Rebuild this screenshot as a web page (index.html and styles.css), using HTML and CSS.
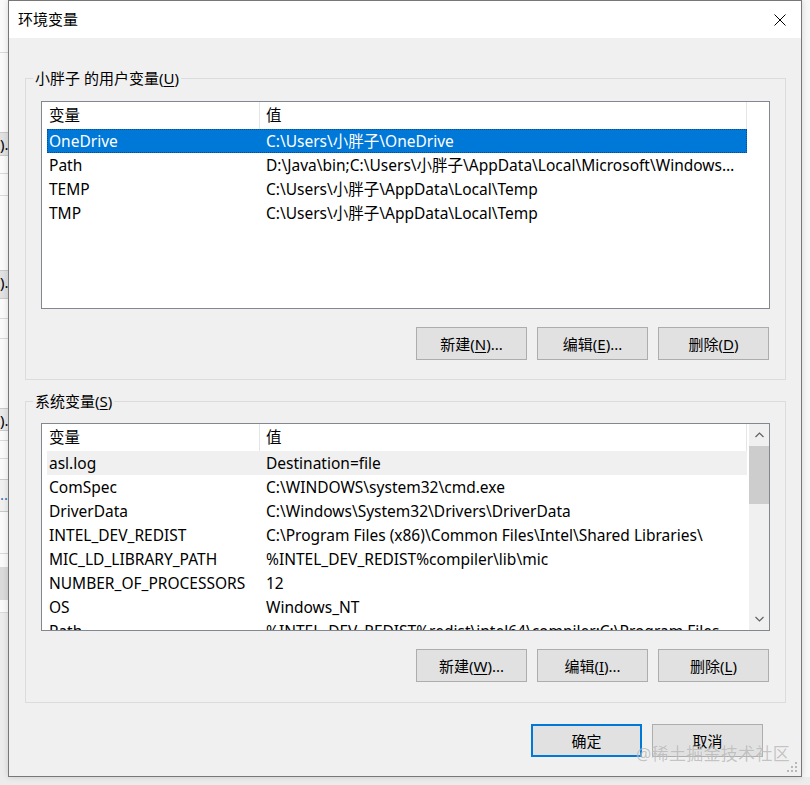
FILE: index.html
```html
<!DOCTYPE html>
<html lang="zh-CN">
<head>
<meta charset="utf-8">
<title>环境变量</title>
<link rel="stylesheet" href="styles.css">
</head>
<body>
<div class="bgwin">
  <div class="bg-seg h52 line"></div>
  <div class="bg-seg h79"></div>
  <div class="bg-btn h24">).</div>
  <div class="bg-seg h17 line"></div>
  <div class="bg-seg h21 line"></div>
  <div class="bg-seg h74"></div>
  <div class="bg-btn h29">).</div>
  <div class="bg-seg h19 line"></div>
  <div class="bg-seg h19 line"></div>
  <div class="bg-seg h69"></div>
  <div class="bg-btn light h23">).</div>
  <div class="bg-seg h9 line"></div>
  <div class="bg-seg h17 line"></div>
  <div class="bg-seg h20"></div>
  <div class="bg-btn h33 dots">…</div>
  <div class="bg-seg h41 line"></div>
  <div class="bg-seg h13"></div>
  <div class="bg-block h33"></div>
  <div class="bg-seg h12 line"></div>
</div>
<div class="rightstrip"></div>

<div class="dialog">
  <div class="titlebar">
    <span class="title">环境变量</span>
    <svg class="close" width="12" height="12" viewBox="0 0 12 12"><path d="M0.5 0.5L11.5 11.5M11.5 0.5L0.5 11.5" stroke="#000" stroke-width="1" fill="none"/></svg>
  </div>
  <div class="body">
    <div class="group g1">
      <span class="legend">小胖子 的用户变量(<u>U</u>)</span>
      <div class="listview">
        <div class="lv-main">
          <div class="lv-head"><span class="hc">变量</span><span class="hc hc2">值</span><span></span></div>
          <div class="row sel"><span class="c1">OneDrive</span><span class="c2">C:\Users\小胖子\OneDrive</span></div>
          <div class="row"><span class="c1">Path</span><span class="c2 cut">D:\Java\bin;C:\Users\小胖子\AppData\Local\Microsoft\WindowsApps;C:\Users</span></div>
          <div class="row"><span class="c1">TEMP</span><span class="c2">C:\Users\小胖子\AppData\Local\Temp</span></div>
          <div class="row"><span class="c1">TMP</span><span class="c2">C:\Users\小胖子\AppData\Local\Temp</span></div>
        </div>
        <div class="lv-side"></div>
      </div>
      <div class="btnrow">
        <button class="btn">新建(<u>N</u>)...</button>
        <button class="btn">编辑(<u>E</u>)...</button>
        <button class="btn">删除(<u>D</u>)</button>
      </div>
    </div>

    <div class="group g2">
      <span class="legend">系统变量(<u>S</u>)</span>
      <div class="listview">
        <div class="lv-main">
          <div class="lv-head"><span class="hc">变量</span><span class="hc hc2">值</span><span></span></div>
          <div class="row hot"><span class="c1">asl.log</span><span class="c2">Destination=file</span></div>
          <div class="row"><span class="c1">ComSpec</span><span class="c2">C:\WINDOWS\system32\cmd.exe</span></div>
          <div class="row"><span class="c1">DriverData</span><span class="c2">C:\Windows\System32\Drivers\DriverData</span></div>
          <div class="row"><span class="c1">INTEL_DEV_REDIST</span><span class="c2">C:\Program Files (x86)\Common Files\Intel\Shared Libraries\</span></div>
          <div class="row"><span class="c1">MIC_LD_LIBRARY_PATH</span><span class="c2">%INTEL_DEV_REDIST%compiler\lib\mic</span></div>
          <div class="row"><span class="c1">NUMBER_OF_PROCESSORS</span><span class="c2">12</span></div>
          <div class="row"><span class="c1">OS</span><span class="c2">Windows_NT</span></div>
          <div class="row"><span class="c1">Path</span><span class="c2">%INTEL_DEV_REDIST%redist\intel64\compiler;C:\Program Files (x86)</span></div>
        </div>
        <div class="lv-side scrollbar">
          <div class="sb-arrow">
            <svg width="9" height="6" viewBox="0 0 9 6"><path d="M0.5 5L4.5 1L8.5 5" stroke="#606060" stroke-width="1.2" fill="none"/></svg>
          </div>
          <div class="sb-thumb"></div>
          <div class="sb-track"></div>
          <div class="sb-arrow">
            <svg width="9" height="6" viewBox="0 0 9 6"><path d="M0.5 1L4.5 5L8.5 1" stroke="#606060" stroke-width="1.2" fill="none"/></svg>
          </div>
        </div>
      </div>
      <div class="btnrow">
        <button class="btn">新建(<u>W</u>)...</button>
        <button class="btn">编辑(<u>I</u>)...</button>
        <button class="btn">删除(<u>L</u>)</button>
      </div>
    </div>

    <div class="footer">
      <button class="btn default">确定</button>
      <button class="btn">取消</button>
    </div>
  </div>
  <svg class="grip" width="11" height="11" viewBox="0 0 11 11">
    <rect x="8" y="0" width="2" height="2" fill="#b8b8b8"/>
    <rect x="4" y="4" width="2" height="2" fill="#b8b8b8"/>
    <rect x="8" y="4" width="2" height="2" fill="#b8b8b8"/>
    <rect x="0" y="8" width="2" height="2" fill="#b8b8b8"/>
    <rect x="4" y="8" width="2" height="2" fill="#b8b8b8"/>
    <rect x="8" y="8" width="2" height="2" fill="#b8b8b8"/>
  </svg>
</div>
<div class="watermark">@稀土掘金技术社区</div>
</body>
</html>
```

FILE: styles.css
```css
* { box-sizing: border-box; }
html, body { margin: 0; padding: 0; }
body {
  width: 810px;
  height: 785px;
  position: relative;
  overflow: hidden;
  background: #ececec;
  font-family: "Noto Sans", "Noto Sans CJK SC", sans-serif;
  font-size: 15.5px;
  color: #000;
}

/* background window peeking out on the left */
.bgwin {
  position: absolute;
  left: 0;
  top: 0;
  width: 8px;
  display: flex;
  flex-direction: column;
  background: #fafafa;
  overflow: hidden;
}
.bg-seg { flex: none; }
.bg-seg.line { border-bottom: 1px solid #d9d9d9; }
.h9 { height: 10px; } .h12 { height: 13px; } .h13 { height: 13px; } .h17 { height: 18px; }
.h19 { height: 20px; } .h20 { height: 20px; } .h21 { height: 22px; } .h23 { height: 23px; }
.h24 { height: 24px; } .h29 { height: 29px; } .h33 { height: 33px; } .h41 { height: 42px; }
.h52 { height: 53px; } .h69 { height: 69px; } .h74 { height: 74px; } .h79 { height: 79px; }
.bg-btn {
  flex: none;
  background: #e1e1e1;
  border-top: 1px solid #c9c9c9;
  border-bottom: 1px solid #c9c9c9;
  text-align: right;
  white-space: nowrap;
  line-height: 22px;
  font-size: 15px;
}
.bg-btn.light { background: #e8e8e8; }
.bg-btn.dots { background: #f0f0f0; color: #3a6fb0; line-height: 28px; }
.bg-block { flex: none; background: #dadada; }

.rightstrip {
  position: absolute;
  left: 802px;
  top: 0;
  width: 8px;
  height: 777px;
  background: #f7f7f7;
}

/* dialog window */
.dialog {
  position: absolute;
  left: 8px;
  top: 0;
  width: 794px;
  height: 777px;
  border: 1px solid #777;
  background: #f0f0f0;
  display: flex;
  flex-direction: column;
  box-shadow: 0 0 6px rgba(0,0,0,0.15);
}
.titlebar {
  flex: none;
  height: 37px;
  background: #fff;
  display: flex;
  align-items: center;
  justify-content: space-between;
  padding: 0 15px 0 9px;
}
.title { line-height: 20px; margin-top: -1px; font-size: 15px; }
.close { display: block; }

.body {
  flex: 1;
  display: flex;
  flex-direction: column;
  padding: 0 15px 0 16px;
}

.group {
  position: relative;
  border: 1px solid #dcdcdc;
  display: flex;
  flex-direction: column;
  padding: 22px 15px 19px 15px;
}
.g1 { margin-top: 40px; }
.g2 { margin-top: 21px; padding-top: 21px; padding-bottom: 20px; }
.legend {
  position: absolute;
  left: 7px;
  top: -11px;
  padding: 0 2px;
  background: #f0f0f0;
  line-height: 20px;
  font-size: 15px;
  white-space: nowrap;
}
u { text-decoration: underline; text-underline-offset: 2px; }

.listview {
  height: 208px;
  border: 1px solid #828790;
  background: #fff;
  display: flex;
  overflow: hidden;
}
.lv-main {
  width: 706px;
  flex: none;
  overflow: hidden;
}
.lv-side { flex: 1; }
.lv-head {
  height: 27px;
  display: grid;
  grid-template-columns: 218px 487px 1fr;
  align-items: center;
}
.hc {
  height: 27px;
  line-height: 27px;
  padding-left: 7px;
  border-right: 1px solid #e5e5e5;
}
.hc2 { padding-left: 6px; }

.row {
  margin-left: 5px;
  width: 700px;
  height: 24px;
  line-height: 24px;
  padding-top: 1px;
  display: grid;
  grid-template-columns: 212px 1fr;
  white-space: nowrap;
}
.row .c1 { padding-left: 2px; overflow: hidden; line-height: 23px; }
.row .c2 { padding-left: 7px; padding-right: 8px; overflow: hidden; text-overflow: ellipsis; line-height: 23px; }
.row .c2.cut { padding-right: 9px; }
.row.sel {
  background: #0078d7;
  color: #fff;
  outline: 1px dotted rgba(0, 40, 90, 0.5);
  outline-offset: -1px;
}
.row.hot { background: #f0f0f0; }

.scrollbar {
  background: #f0f0f0;
  display: flex;
  flex-direction: column;
  flex: none;
  width: 20px;
  margin-left: 1px;
}
.sb-arrow {
  height: 22px;
  flex: none;
  display: flex;
  align-items: center;
  justify-content: center;
}
.sb-thumb { height: 58px; flex: none; background: #cdcdcd; }
.sb-track { flex: 1; }

.btnrow {
  display: flex;
  justify-content: flex-end;
  gap: 10px;
  margin-top: 18px;
  padding-right: 1px;
}
.btn {
  width: 111px;
  height: 33px;
  border: 1px solid #adadad;
  background: #e1e1e1;
  font-family: inherit;
  font-size: 15px;
  color: #000;
  padding: 0;
  line-height: 20px;
}
.btn.default { border: 2px solid #0078d7; }

.footer {
  display: flex;
  justify-content: flex-end;
  gap: 10px;
  margin-top: 21px;
  padding-right: 23px;
}

.grip {
  position: absolute;
  right: 3px;
  bottom: 3px;
}

.watermark {
  position: absolute;
  left: 636px;
  top: 743px;
  font-size: 17px;
  line-height: 22px;
  color: rgba(150, 150, 150, 0.55);
  text-shadow: 0 0 1px rgba(255,255,255,0.6);
  white-space: nowrap;
  letter-spacing: 0.3px;
}
```
